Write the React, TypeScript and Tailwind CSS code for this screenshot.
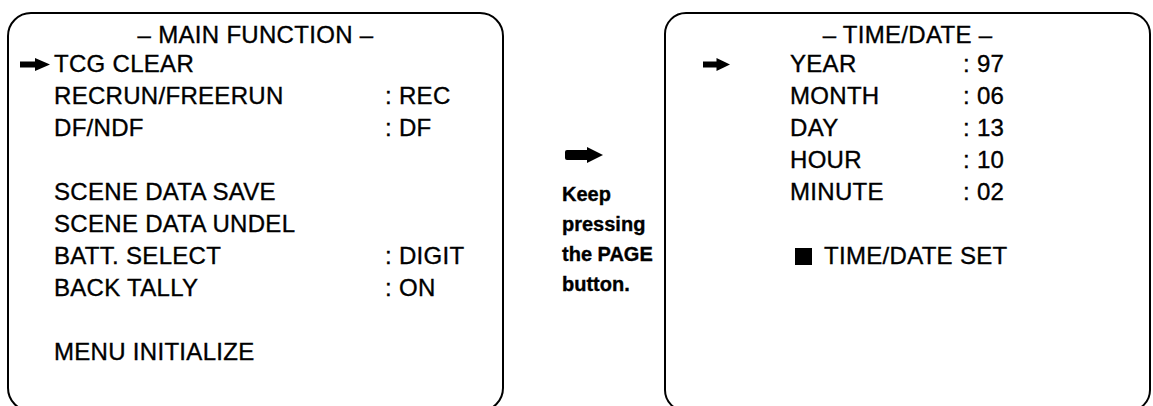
import React from "react";

const mainRows: { label: string; value?: string; pointer?: boolean }[] = [
  { label: "TCG CLEAR", pointer: true },
  { label: "RECRUN/FREERUN", value: ": REC" },
  { label: "DF/NDF", value: ": DF" },
  { label: "" },
  { label: "SCENE DATA SAVE" },
  { label: "SCENE DATA UNDEL" },
  { label: "BATT. SELECT", value: ": DIGIT" },
  { label: "BACK TALLY", value: ": ON" },
  { label: "" },
  { label: "MENU INITIALIZE" },
];

const timeRows = [
  { label: "YEAR", value: ": 97" },
  { label: "MONTH", value: ": 06" },
  { label: "DAY", value: ": 13" },
  { label: "HOUR", value: ": 10" },
  { label: "MINUTE", value: ": 02" },
];

function Pointer({ w = 30 }: { w?: number }) {
  return (
    <svg width={w} height="13" viewBox="0 0 30 13" preserveAspectRatio="none">
      <rect x="0" y="3.5" width="17" height="6" fill="#000" />
      <polygon points="15,0 30,6.5 15,13" fill="#000" />
    </svg>
  );
}

export default function App() {
  return (
    <div
      className="w-[1153px] h-[406px] overflow-hidden bg-white text-black flex items-start pt-[12px] pl-[7px] [-webkit-text-stroke:0.35px_#000]"
      style={{ fontFamily: '"Liberation Sans", Arial, sans-serif' }}
    >
      {/* left menu page */}
      <div className="w-[497px] h-[400px] shrink-0 border-2 border-black rounded-[24px] pt-[8px] text-[24px] tracking-[0.3px]">
        <div className="text-center leading-[26px]">– MAIN FUNCTION –</div>
        <div className="grid grid-cols-[45px_331px_1fr] leading-[32px]">
          {mainRows.map((r, i) => (
            <React.Fragment key={i}>
              <div className="flex items-center h-[32px] pl-[11px]">{r.pointer && <Pointer />}</div>
              <div className="h-[32px] whitespace-nowrap">{r.label}</div>
              <div className="h-[32px] whitespace-nowrap">{r.value}</div>
            </React.Fragment>
          ))}
        </div>
      </div>

      {/* middle note */}
      <div className="w-[160px] shrink-0 pt-[135px] pl-[58px]">
        <svg width="38" height="16" viewBox="0 0 38 16" className="ml-[3px]">
          <rect x="0" y="3" width="25" height="10" rx="2" fill="#000" />
          <polygon points="22,0 38,8 22,16" fill="#000" />
        </svg>
        <div className="mt-[16px] text-[20px] font-bold leading-[30px]">
          Keep
          <br />
          pressing
          <br />
          the PAGE
          <br />
          button.
        </div>
      </div>

      {/* right time/date page */}
      <div className="w-[487px] h-[400px] shrink-0 border-2 border-black rounded-[22px] pt-[8px] text-[24px] tracking-[0.3px]">
        <div className="text-center leading-[26px]">– TIME/DATE –</div>
        <div className="grid grid-cols-[124px_173px_1fr] leading-[32px]">
          {timeRows.map((r, i) => (
            <React.Fragment key={r.label}>
              <div className="flex items-center h-[32px] pl-[37px]">{i === 0 && <Pointer w={27} />}</div>
              <div className="h-[32px]">{r.label}</div>
              <div className="h-[32px]">{r.value}</div>
            </React.Fragment>
          ))}
        </div>
        <div className="flex items-center mt-[32px] pl-[129px] leading-[32px]">
          <div className="w-[17px] h-[17px] bg-black mr-[12px]" />
          <span>TIME/DATE SET</span>
        </div>
      </div>
    </div>
  );
}
